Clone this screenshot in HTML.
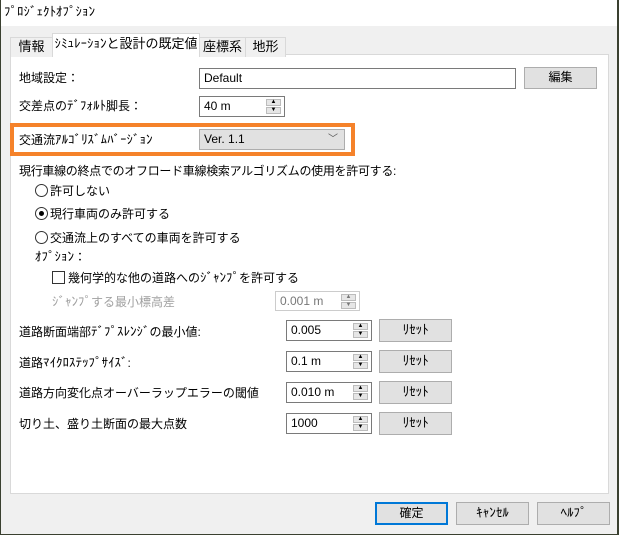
<!DOCTYPE html><html><head><meta charset="utf-8"><style>
*{box-sizing:border-box}
body{margin:0;width:619px;height:535px;background:#3a4030;font-family:"Liberation Sans","Noto Sans CJK JP",sans-serif;font-size:12px;color:#000;position:relative;overflow:hidden}
.a{position:absolute;white-space:nowrap}
.h{font-family:"IPAGothic","Noto Sans CJK JP",sans-serif;font-size:13px}
.win{position:absolute;left:1px;top:0;width:616px;height:534px;background:#f0f0f0}
.title{position:absolute;left:0;top:0;width:616px;height:26px;background:#fff}
.panel{position:absolute;left:9px;top:54px;width:599px;height:440px;background:#fff;border:1px solid #d9d9d9}
.tab{position:absolute;top:35px;height:20px;background:#f0f0f0;border:1px solid #d9d9d9;border-bottom:none;text-align:center;line-height:18px;font-size:13px;white-space:nowrap;overflow:hidden}
.inp{position:absolute;background:#fff;border:1px solid #7a7a7a;padding-left:4px;line-height:18px}
.btn{position:absolute;background:#e1e1e1;border:1px solid #adadad;text-align:center;line-height:19px}
.sp{position:absolute;right:3px;top:2px;width:15px;height:15px}
.sp div{height:7px;background:#e6e6e6;border:1px solid #bcbcbc;margin-bottom:1px;font-size:6px;line-height:5px;text-align:center}
.rad{display:inline-block;width:13px;height:13px;border:1px solid #333;border-radius:50%;vertical-align:-2px;margin-right:2px;position:relative}
</style></head><body>
<div class="win">
<div class="title"><span class="a h" style="left:3px;top:5px">ﾌﾟﾛｼﾞｪｸﾄｵﾌﾟｼｮﾝ</span></div>
<div class="panel"></div>
<div class="tab" style="left:9px;width:43px;top:37px">情報</div>
<div class="tab" style="left:51px;width:148px;top:33px;height:22px;background:#fff;line-height:20px"><span class="h">ｼﾐｭﾚｰｼｮﾝ</span>と設計の既定値</div>
<div class="tab" style="left:198px;width:47px;top:37px">座標系</div>
<div class="tab" style="left:244px;width:41px;top:37px">地形</div>

<span class="a" style="left:18px;top:69px">地域設定：</span>
<div class="inp" style="left:198px;top:68px;width:317px;height:21px">Default</div>
<div class="btn" style="left:523px;top:67px;width:73px;height:22px">編集</div>

<span class="a" style="left:18px;top:97px">交差点の<span class="h">ﾃﾞﾌｫﾙﾄ</span>脚長：</span>
<div class="inp" style="left:198px;top:96px;width:86px;height:21px">40 m<div class="sp"><div>▲</div><div>▼</div></div></div>

<div class="a" style="left:9px;top:123px;width:345px;height:33px;border:4px solid #f5822a"></div>
<span class="a" style="left:18px;top:131px">交通流<span class="h">ｱﾙｺﾞﾘｽﾞﾑﾊﾞｰｼﾞｮﾝ</span></span>
<div class="a" style="left:198px;top:129px;width:146px;height:21px;background:#e1e1e1;border:1px solid #adadad;padding-left:4px;line-height:19px">Ver. 1.1<span class="a" style="right:6px;top:0;color:#555;font-size:10px">﹀</span></div>

<span class="a" style="left:18px;top:162px;letter-spacing:-0.3px">現行車線の終点でのオフロード車線検索アルゴリズムの使用を許可する:</span>
<span class="a" style="left:34px;top:182px"><span class="rad"></span>許可しない</span>
<span class="a" style="left:34px;top:205px"><span class="rad"><span style="position:absolute;left:3px;top:3px;width:5px;height:5px;border-radius:50%;background:#000"></span></span>現行車両のみ許可する</span>
<span class="a" style="left:34px;top:229px"><span class="rad"></span>交通流上のすべての車両を許可する</span>
<span class="a" style="left:34px;top:248px"><span class="h">ｵﾌﾟｼｮﾝ</span>：</span>
<span class="a" style="left:51px;top:269px"><span style="display:inline-block;width:13px;height:13px;border:1px solid #333;vertical-align:-2px;margin-right:3px"></span>幾何学的な他の道路への<span class="h">ｼﾞｬﾝﾌﾟ</span>を許可する</span>
<span class="a" style="left:51px;top:293px;color:#a0a0a0"><span class="h">ｼﾞｬﾝﾌﾟ</span>する最小標高差</span>
<div class="inp" style="left:274px;top:291px;width:85px;height:20px;border-color:#ccc;color:#777">0.001 m<div class="sp"><div>▲</div><div>▼</div></div></div>

<span class="a" style="left:18px;top:323px">道路断面端部<span class="h">ﾃﾞﾌﾟｽﾚﾝｼﾞ</span>の最小値:</span>
<div class="inp" style="left:285px;top:320px;width:86px;height:21px">0.005<div class="sp"><div>▲</div><div>▼</div></div></div>
<div class="btn h" style="left:378px;top:319px;width:73px;height:23px">ﾘｾｯﾄ</div>
<span class="a" style="left:18px;top:354px">道路<span class="h">ﾏｲｸﾛｽﾃｯﾌﾟｻｲｽﾞ</span>:</span>
<div class="inp" style="left:285px;top:351px;width:86px;height:21px">0.1 m<div class="sp"><div>▲</div><div>▼</div></div></div>
<div class="btn h" style="left:378px;top:350px;width:73px;height:23px">ﾘｾｯﾄ</div>
<span class="a" style="left:18px;top:384px">道路方向変化点オーバーラップエラーの閾値</span>
<div class="inp" style="left:285px;top:382px;width:86px;height:21px">0.010 m<div class="sp"><div>▲</div><div>▼</div></div></div>
<div class="btn h" style="left:378px;top:381px;width:73px;height:23px">ﾘｾｯﾄ</div>
<span class="a" style="left:18px;top:415px">切り土、盛り土断面の最大点数</span>
<div class="inp" style="left:285px;top:413px;width:86px;height:21px">1000<div class="sp"><div>▲</div><div>▼</div></div></div>
<div class="btn h" style="left:378px;top:412px;width:73px;height:23px">ﾘｾｯﾄ</div>

<div class="btn" style="left:374px;top:502px;width:73px;height:23px;border:2px solid #0078d7;line-height:19px">確定</div>
<div class="btn h" style="left:455px;top:502px;width:73px;height:23px">ｷｬﾝｾﾙ</div>
<div class="btn h" style="left:536px;top:502px;width:73px;height:23px">ﾍﾙﾌﾟ</div>
</div>
</body></html>
